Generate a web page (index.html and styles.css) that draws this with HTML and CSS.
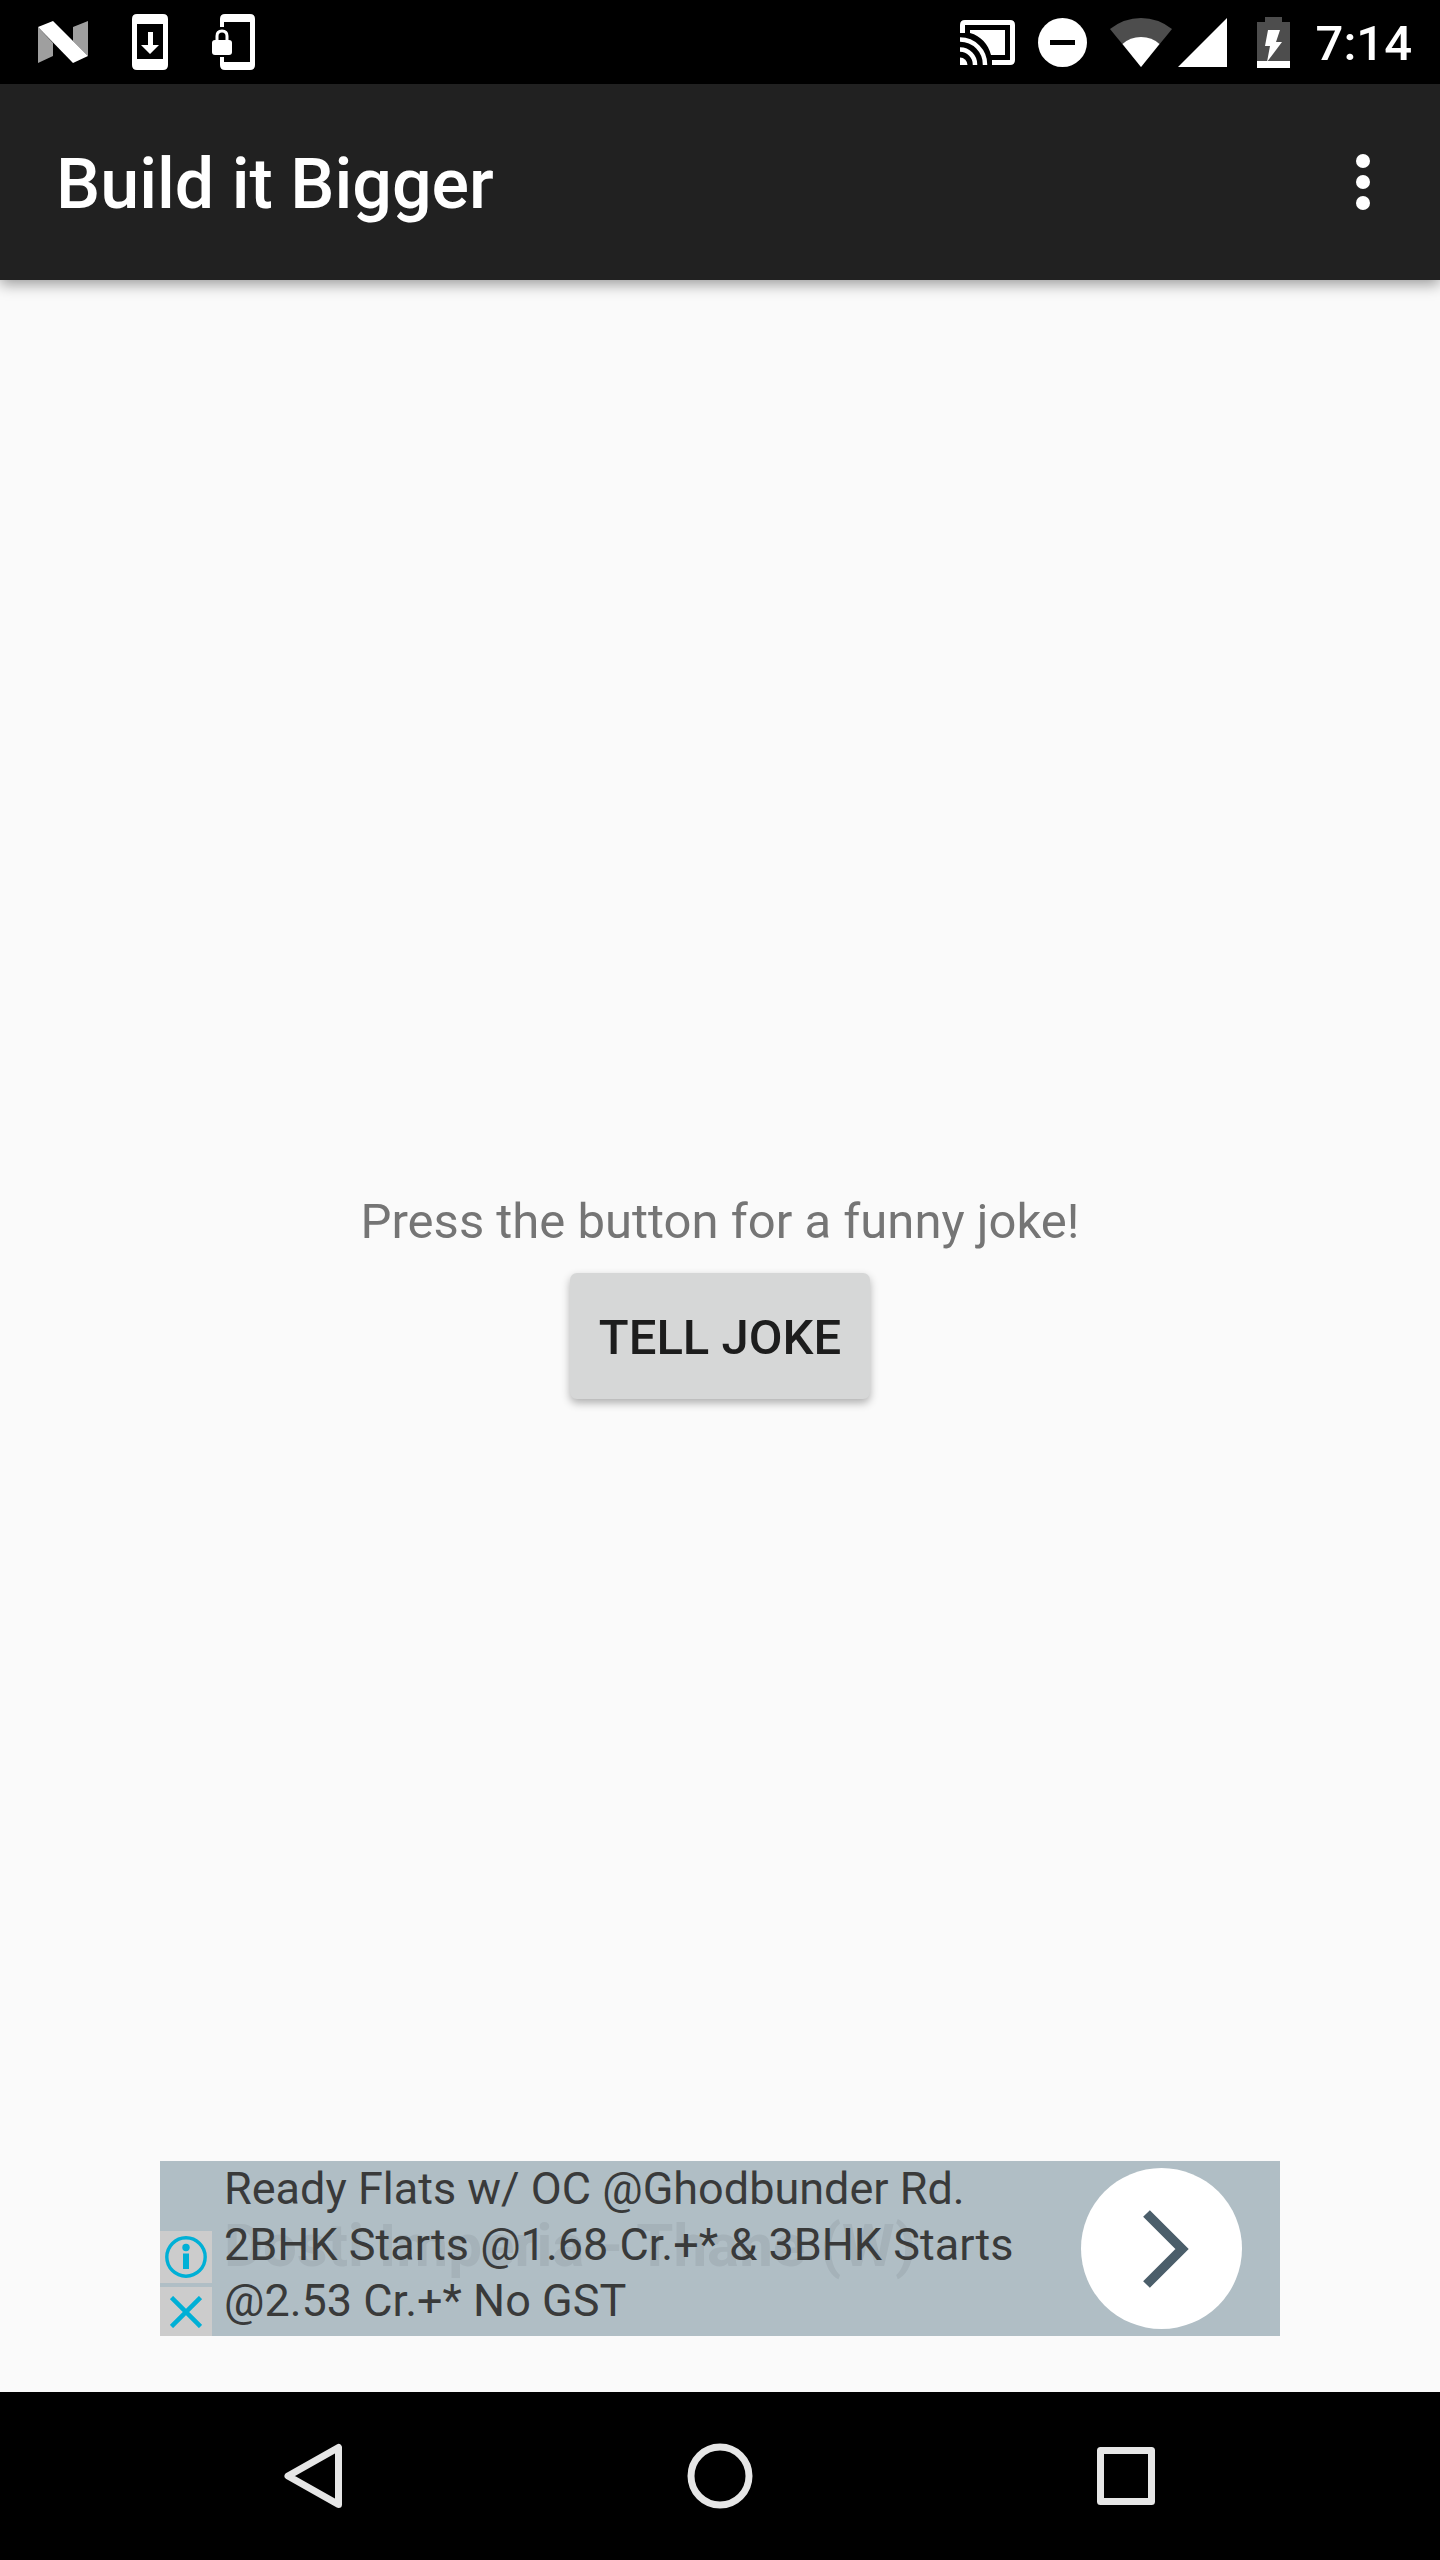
FILE: index.html
```html
<!DOCTYPE html>
<html lang="en">
<head>
<meta charset="utf-8">
<meta name="viewport" content="width=device-width, initial-scale=1">
<title>Build it Bigger</title>
<link rel="stylesheet" href="styles.css">
</head>
<body>
<div class="status-bar">
  <div class="notifications">
    <svg width="50" height="42" viewBox="0 0 50 42" role="img" aria-label="Android N">
      <path fill="#9f9f9f" d="M0 6L15 22V35L0 42zM35 6L50 0V35L35 20z"/>
      <path fill="#fff" d="M0 6L15 0L50 35L35 42z"/>
    </svg>
    <svg width="36" height="56" viewBox="0 0 36 56" role="img" aria-label="System update">
      <path fill="#fff" fill-rule="evenodd" d="M5 0H31Q36 0 36 5V51Q36 56 31 56H5Q0 56 0 51V5Q0 0 5 0zM5 10V45H31V10z"/>
      <path fill="#fff" d="M16 18H21V31H27L18 40L9 31H16z"/>
    </svg>
    <svg width="44" height="56" viewBox="0 0 44 56" role="img" aria-label="Screen lock">
      <path fill="#fff" d="M8 13V5Q8 0 13 0H38Q43 0 43 5V51Q43 56 38 56H13Q8 56 8 51V43H12V48H38V8H12V13z"/>
      <path fill="#fff" d="M3 26H17Q20 26 20 29V38Q20 41 17 41H3Q0 41 0 38V29Q0 26 3 26z"/>
      <path fill="none" stroke="#fff" stroke-width="3" d="M5 27V22Q5 17 10 17T15 22V27"/>
    </svg>
  </div>
  <div class="indicators">
    <svg class="cast" width="55" height="45" viewBox="0 0 55 45" role="img" aria-label="Cast">
      <path fill="none" stroke="#fff" stroke-width="5" d="M2.500 13V5Q2.500 2.500 5 2.500H50Q52.500 2.500 52.500 5V40Q52.500 42.500 50 42.500H32"/>
      <path fill="#fff" d="M10 10H45V35H31C28 24 21 16 10 13z"/>
      <path fill="#fff" d="M0 37.500A7.500 7.500 0 0 1 7.500 45H0z"/>
      <path fill="none" stroke="#fff" stroke-width="4.500" d="M0 29.500A15 15 0 0 1 15 45M0 19.500A25 25 0 0 1 25 45"/>
    </svg>
    <svg class="dnd" width="49" height="49" viewBox="0 0 49 49" role="img" aria-label="Do not disturb">
      <circle cx="24.500" cy="24.500" r="24.500" fill="#fff"/>
      <path d="M12 22H37V27H12z"/>
    </svg>
    <svg class="wifi" width="62" height="49" viewBox="0 0 62 49" role="img" aria-label="Wi-Fi">
      <path fill="#4d4d4d" d="M0 11Q14 0 31 0T62 11L31 49z"/>
      <path fill="#fff" d="M12.500 26Q20 19 31 19T49.500 26L31 49z"/>
    </svg>
    <svg class="signal" width="49" height="49" viewBox="0 0 49 49" role="img" aria-label="Signal">
      <path fill="#fff" d="M49 0V49H0z"/>
    </svg>
    <svg class="battery" width="33" height="51" viewBox="0 0 33 51" role="img" aria-label="Battery charging">
      <path fill="#4d4d4d" d="M8 0H25V5H33V51H0V5H8z"/>
      <path fill="#fff" d="M0 44H33V51H0zM11 13H23L19 25H25L10 45L13 29H8z"/>
    </svg>
    <time class="clock">7:14</time>
  </div>
</div>

<header class="app-bar">
  <h1 class="title">Build it Bigger</h1>
  <button class="overflow" type="button" aria-label="More options">
    <svg width="14" height="56" viewBox="0 0 14 56" fill="#fff">
      <circle cx="7" cy="7" r="7"/><circle cx="7" cy="28" r="7"/><circle cx="7" cy="49" r="7"/>
    </svg>
  </button>
</header>

<main class="content">
  <p class="prompt">Press the button for a funny joke!</p>
  <button class="joke-button" type="button">TELL JOKE</button>
  <aside class="ad" aria-label="Advertisement">
    <div class="ad-choices">
      <button class="ad-choice" type="button" aria-label="Ad information">
        <svg width="42" height="42" viewBox="0 0 42 42">
          <circle cx="21" cy="21" r="19.200" fill="none" stroke="#00b0d6" stroke-width="3.400"/>
          <circle cx="21" cy="11.500" r="3.700" fill="#00b0d6"/>
          <path fill="#00b0d6" d="M18 17.500H24V33H18z"/>
        </svg>
      </button>
      <button class="ad-choice ad-close" type="button" aria-label="Close ad">
        <svg width="32" height="32" viewBox="0 0 32 32">
          <path stroke="#00b0d6" stroke-width="4.500" d="M1.500 1.500L30.500 30.500M30.500 1.500L1.500 30.500"/>
        </svg>
      </button>
    </div>
    <div class="ad-copy">
      <p class="ad-headline">Dosti Imperia - Thane (W)</p>
      <p class="ad-text">Ready Flats w/ OC @Ghodbunder Rd. 2BHK Starts @1.68 Cr.+* &amp; 3BHK Starts @2.53 Cr.+* No GST</p>
    </div>
    <a class="ad-go" href="#" aria-label="Open ad">
      <svg width="54" height="78" viewBox="0 0 54 78">
        <path fill="none" stroke="#4b5e6a" stroke-width="9.500" d="M11.500 3.500L47 39L11.500 74.500"/>
      </svg>
    </a>
  </aside>
</main>

<nav class="nav-bar" aria-label="System">
  <button class="nav-key" type="button" aria-label="Back">
    <svg width="66" height="66" viewBox="0 0 66 66" fill="none" stroke="#e6e6e6" stroke-width="7" stroke-linejoin="round">
      <path d="M57.500 4.500V61.500L7 33z"/>
    </svg>
  </button>
  <button class="nav-key" type="button" aria-label="Home">
    <svg width="66" height="66" viewBox="0 0 66 66" fill="none" stroke="#e6e6e6" stroke-width="7">
      <circle cx="33" cy="33" r="29"/>
    </svg>
  </button>
  <button class="nav-key" type="button" aria-label="Recent apps">
    <svg width="66" height="66" viewBox="0 0 66 66" fill="none" stroke="#e6e6e6" stroke-width="7" stroke-linejoin="round">
      <path d="M7.500 7.500H58.500V58.500H7.500z"/>
    </svg>
  </button>
</nav>
</body>
</html>
```
FILE: styles.css
```css
* {
  box-sizing: border-box;
}

body {
  margin: 0;
  min-height: 100vh;
  display: flex;
  flex-direction: column;
  background: #fafafa;
  font-family: Roboto, "Liberation Sans", sans-serif;
}

h1,
p {
  margin: 0;
}

button {
  border: 0;
  padding: 0;
  background: none;
  font-family: inherit;
}

svg {
  display: block;
}

.status-bar {
  display: flex;
  justify-content: space-between;
  align-items: center;
  height: 84px;
  padding: 0 28px 0 38px;
  background: #000;
}

.notifications {
  display: flex;
  align-items: center;
  gap: 44px;
}

.indicators {
  display: flex;
  align-items: center;
}

.cast {
  margin-right: 23px;
}

.dnd {
  margin-right: 23px;
}

.wifi {
  margin-right: 6px;
}

.signal {
  margin-right: 30px;
}

.battery {
  margin-right: 26px;
}

.clock {
  padding-top: 4px;
  color: #fff;
  font-size: 49px;
  font-weight: 500;
  line-height: 56px;
}

.app-bar {
  position: relative;
  display: flex;
  justify-content: space-between;
  align-items: center;
  height: 196px;
  padding: 0 28px 0 56px;
  background: #212121;
  box-shadow: 0 4px 14px rgba(0, 0, 0, 0.4);
}

.title {
  padding-top: 4px;
  color: #fff;
  font-size: 70px;
  font-weight: 500;
  line-height: 84px;
}

.overflow {
  display: grid;
  place-items: center;
  width: 98px;
  height: 168px;
}

.content {
  flex: 1;
  display: grid;
  grid-template-rows: 1fr auto 1fr;
  justify-items: center;
  padding: 56px 0;
}

.prompt {
  align-self: end;
  margin-bottom: 19px;
  color: #757575;
  font-size: 49px;
  line-height: 64px;
}

.joke-button {
  min-width: 300px;
  height: 126px;
  padding: 3px 24px 0;
  border-radius: 7px;
  background: #d6d7d7;
  box-shadow: 0 4px 8px rgba(0, 0, 0, 0.3);
  color: #1d1d1d;
  font-size: 49px;
  font-weight: 500;
}

.ad {
  align-self: end;
  display: flex;
  width: 1120px;
  max-width: 100%;
  min-height: 175px;
  background: #b0bec5;
}

.ad-choices {
  display: flex;
  flex-direction: column;
  justify-content: flex-end;
  gap: 4px;
  width: 52px;
}

.ad-choice {
  display: grid;
  place-items: center;
  height: 52px;
  background: #ccc;
}

.ad-close {
  height: 49px;
}

.ad-copy {
  position: relative;
  flex: 1;
  padding: 0 28px 0 12px;
}

.ad-headline {
  position: absolute;
  top: 50px;
  left: 12px;
  color: #a5b2b9;
  font-size: 60px;
  font-weight: 700;
  line-height: 70px;
  white-space: nowrap;
}

.ad-text {
  position: relative;
  color: #393a3a;
  font-size: 45px;
  line-height: 56px;
}

.ad-go {
  flex: none;
  align-self: center;
  display: grid;
  place-items: center;
  width: 161px;
  height: 161px;
  margin-right: 38px;
  border-radius: 50%;
  background: #fff;
}

.nav-bar {
  display: grid;
  grid-template-columns: repeat(3, 1fr);
  height: 168px;
  padding: 0 111px;
  background: #000;
}

.nav-key {
  display: grid;
  place-items: center;
}
```
